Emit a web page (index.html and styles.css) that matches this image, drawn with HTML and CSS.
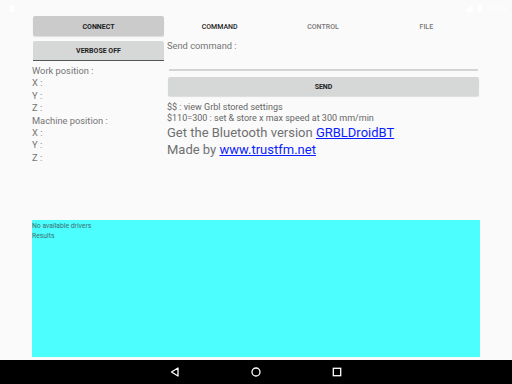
FILE: index.html
```html
<!DOCTYPE html>
<html lang="en">

<head>
    <meta charset="UTF-8">
    <title>GRBL Droid</title>
    <link rel="stylesheet" href="styles.css">
</head>

<body>
    <div class="screen">
        <div class="status-bar">
            <span class="status-left"></span>
            <span class="status-right">
                <svg class="status-icon" viewBox="0 0 10 10" width="8" height="8"><path d="M0 10 L10 0 L10 10 Z" fill="#fff"/></svg>
                <svg class="status-icon" viewBox="0 0 10 10" width="7" height="8"><rect x="2" y="1" width="6" height="9" fill="#fff"/></svg>
                <span class="clock">12:44</span>
            </span>
        </div>

        <div class="main">
            <div class="side">
                <button class="btn btn-connect">CONNECT</button>
                <button class="btn btn-verbose">VERBOSE OFF</button>
                <div class="positions">
                    <p>Work position :</p>
                    <p>X :</p>
                    <p>Y :</p>
                    <p>Z :</p>
                    <p>Machine position :</p>
                    <p>X :</p>
                    <p>Y :</p>
                    <p>Z :</p>
                </div>
            </div>

            <div class="panel">
                <div class="tabs">
                    <span class="tab active">COMMAND</span>
                    <span class="tab">CONTROL</span>
                    <span class="tab">FILE</span>
                </div>
                <div class="label">Send command :</div>
                <div class="input-line"></div>
                <button class="btn btn-send">SEND</button>
                <div class="hints">
                    <p>$$ : view Grbl stored settings</p>
                    <p>$110=300 : set &amp; store x max speed at 300 mm/min</p>
                </div>
                <div class="big">
                    <p>Get the Bluetooth version <a href="#">GRBLDroidBT</a></p>
                    <p>Made by <a href="#">www.trustfm.net</a></p>
                </div>
            </div>
        </div>

        <div class="results">
            <p>No available drivers</p>
            <p>Results</p>
        </div>

        <div class="nav-bar">
            <svg viewBox="0 0 12 12" width="12" height="12"><path d="M9 2 L9 10 L2.5 6 Z" fill="none" stroke="#fff" stroke-width="1.3" stroke-linejoin="round"/></svg>
            <svg viewBox="0 0 12 12" width="12" height="12"><circle cx="6" cy="6" r="4" fill="none" stroke="#fff" stroke-width="1.3"/></svg>
            <svg viewBox="0 0 12 12" width="12" height="12"><rect x="2.3" y="2.3" width="7.4" height="7.4" fill="none" stroke="#fff" stroke-width="1.3"/></svg>
        </div>
    </div>
</body>

</html>
```

FILE: styles.css
```css
body {
    margin: 0;
    font-family: Roboto, "Liberation Sans", sans-serif;
}

p {
    margin: 0;
}

.screen {
    width: 512px;
    height: 384px;
    background: #fafafa;
    display: flex;
    flex-direction: column;
}

.status-bar {
    height: 16px;
    display: flex;
    justify-content: space-between;
    align-items: center;
    padding: 0 6px 0 10px;
}

.status-left {
    width: 4px;
    height: 7px;
    background: #fff;
}

.status-right {
    display: flex;
    align-items: center;
    gap: 3px;
}

.clock {
    color: #fff;
    font-size: 8px;
}

.main {
    display: flex;
    height: 204px;
    padding-left: 32px;
}

/* left column */

.side {
    width: 132px;
    display: flex;
    flex-direction: column;
}

.btn {
    display: block;
    border: none;
    padding: 1px 0 0;
    font-family: Roboto, "Liberation Sans", sans-serif;
    font-size: 7px;
    font-weight: bold;
    color: #222;
    border-radius: 2px;
}

.btn-connect {
    width: 131px;
    height: 20px;
    margin-left: 1px;
    background: #cbcbcb;
    box-shadow: 0 1px 1px rgb(0 0 0 / 12%);
}

.btn-verbose {
    width: 131px;
    height: 20px;
    margin: 5px 0 0 1px;
    background: #d6d7d7;
    border-bottom: 1.5px solid #555;
    border-radius: 2px 2px 0 0;
}

.positions {
    margin-top: 4px;
    font-size: 9.3px;
    line-height: 12.4px;
    color: #757575;
}

/* right column */

.panel {
    width: 313px;
    margin-left: 3px;
    display: flex;
    flex-direction: column;
}

.tabs {
    display: flex;
    height: 20px;
    padding-top: 1px;
    box-sizing: border-box;
    align-items: center;
    margin-left: 1px;
    width: 310px;
}

.tab {
    flex: 1;
    text-align: center;
    font-size: 7px;
    font-weight: 500;
    color: #777;
}

.tab.active {
    color: #222;
}

.label {
    margin-top: 4px;
    font-size: 9.3px;
    line-height: 11px;
    color: #757575;
}

.input-line {
    margin: 18px 0 0 2px;
    width: 309px;
    height: 2px;
    background: #d4d4d4;
}

.btn-send {
    width: 311px;
    height: 19px;
    margin: 6px 0 0 1px;
    background: #d6d7d7;
    box-shadow: 0 1px 1px rgb(0 0 0 / 12%);
}

.hints {
    margin-top: 6px;
    font-size: 9px;
    line-height: 10.8px;
    color: #666;
}

.big {
    margin-top: 0;
    font-size: 13px;
    line-height: 17px;
    color: #707070;
}

.big a {
    color: #0b1cff;
}

/* results */

.results {
    width: 448px;
    height: 137px;
    padding-top: 2px;
    box-sizing: border-box;
    margin-left: 32px;
    background: #4cfefe;
    font-size: 6.8px;
    line-height: 9.5px;
    color: #3f6f6f;
}

.nav-bar {
    margin-top: 3px;
    flex: 1;
    background: #000;
    display: flex;
    justify-content: center;
    align-items: center;
    gap: 69px;
}
```
